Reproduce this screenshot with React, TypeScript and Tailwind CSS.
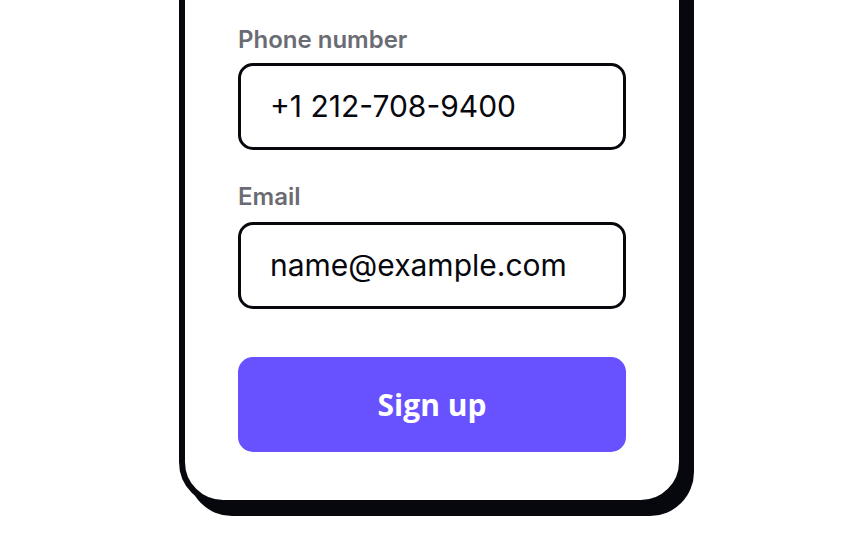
export default function App() {
	return (
		<div className="h-[540px] w-full overflow-hidden bg-white flex justify-center">
			<div className="-mt-[30px] h-[536px] w-[506px] rounded-b-[44px] border-[6px] border-[#07070e] bg-white shadow-[9px_10px_0_0_#07070e] px-[53px] pt-[49px]">
				<form className="flex flex-col" onSubmit={(e) => e.preventDefault()}>
					<label className="mb-[8px] text-[24px] leading-[30px] font-semibold text-[#6b6b73] font-['Inter',sans-serif]">
						Phone number
					</label>
					<div className="h-[87px] rounded-[15px] border-[3px] border-[#07070e] flex items-center pl-[29px] text-[30px] text-[#07070e] font-['Inter',sans-serif]">
						+1 212-708-9400
					</div>
					<label className="mt-[32px] mb-[10px] text-[24px] leading-[30px] font-semibold text-[#6b6b73] font-['Inter',sans-serif]">
						Email
					</label>
					<div className="h-[87px] rounded-[15px] border-[3px] border-[#07070e] flex items-center pl-[29px] text-[30px] text-[#07070e] font-['Inter',sans-serif]">
						name@example.com
					</div>
					<button
						type="submit"
						className="mt-[48px] h-[95px] rounded-[15px] bg-[#6851ff] text-white text-[30px] font-bold font-['Open_Sans',sans-serif]"
					>
						Sign up
					</button>
				</form>
			</div>
		</div>
	)
}
